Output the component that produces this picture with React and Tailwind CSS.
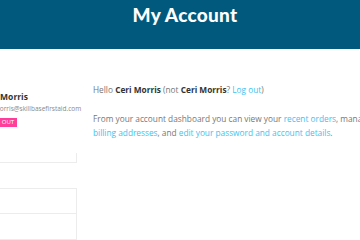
export default function App() {
  return (
    <div className="w-[360px] h-[240px] overflow-hidden bg-white font-['Open_Sans',sans-serif]">
      <header className="h-[49px] bg-[#015a7e] flex justify-center">
        <h1 className="mt-[3px] ml-[10px] text-[19px] leading-[24px] font-black text-white font-['Lato',sans-serif] tracking-[0.3px]">
          My Account
        </h1>
      </header>

      <div className="flex">
        {/* sidebar, cut off on the left */}
        <aside className="w-[107px] shrink-0 ml-[-30px]">
          <div className="pt-[43px] pl-[11px]">
            <div className="text-[8.5px] leading-[10px] font-bold text-[#333]">Ceri Morris</div>
            <div className="mt-[3px] text-[6.5px] leading-[8px] text-[#888] whitespace-nowrap">ceri.morris@skillbasefirstaid.com</div>
            <div className="w-fit mt-[5px] ml-[4px] px-[3px] h-[9px] leading-[9px] text-[6px] text-white bg-[#ff3d9a]">LOG OUT</div>
          </div>
          <div className="mt-[26px] h-[10px] border-r border-b border-[#ececec]"></div>
          <div className="mt-[25px] border border-[#ececec]">
            <div className="h-[25px] border-b border-[#ececec]"></div>
            <div className="h-[25px]"></div>
          </div>
        </aside>

        <main className="ml-[16px] pt-[34px] text-[8.3px] leading-[14px] text-[#777] shrink-0">
          <p className="whitespace-nowrap">
            Hello <strong className="text-[#333]">Ceri Morris</strong> (not <strong className="text-[#333]">Ceri Morris</strong>? <a className="text-[#3cc3f2]">Log out</a>)
          </p>
          <p className="mt-[15px] w-[370px]">
            From your account dashboard you can view your <a className="text-[#3cc3f2]">recent orders</a>, manage your shipping and <a className="text-[#3cc3f2]">billing addresses</a>, and <a className="text-[#3cc3f2]">edit your password and account details</a>.
          </p>
        </main>
      </div>
    </div>
  );
}
